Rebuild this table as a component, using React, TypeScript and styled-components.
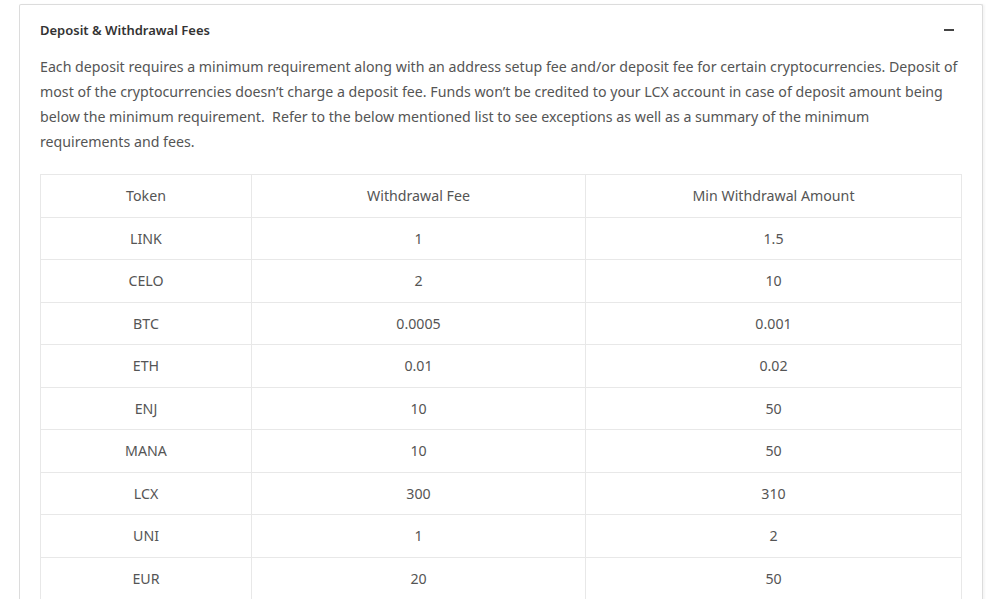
import React from "react";
import styled, { createGlobalStyle } from "styled-components";

const Global = createGlobalStyle`
  html, body { margin: 0; padding: 0; background: #fff; }
  body { font-family: "Noto Sans", "Open Sans", sans-serif; color: #555; }
  * { box-sizing: border-box; }
`;

const Page = styled.div`
  padding: 4px 17px 0 19px;
  height: 599px;
  overflow: hidden;
`;

const Card = styled.section`
  border: 1px solid #dcdcdc;
  border-bottom: none;
  border-radius: 2px;
  background: #fff;
  padding: 15px 20px 0 20px;
  box-shadow: 2px 0 2px rgba(0, 0, 0, 0.04);
  min-height: 620px;
`;

const Header = styled.div`
  display: flex;
  align-items: center;
  justify-content: space-between;
  height: 20px;
`;

const Title = styled.h3`
  margin: 0;
  font-size: 13px;
  font-weight: 600;
  color: #333;
`;

const Minus = styled.span`
  display: block;
  width: 10px;
  height: 2px;
  background: #444;
  margin-right: 8px;
`;

const Text = styled.p`
  margin: 14px 0 0 0;
  font-size: 14.2px;
  line-height: 25px;
  color: #555;
`;

const Table = styled.table`
  margin-top: 20px;
  width: 921px;
  border-collapse: collapse;
  table-layout: fixed;
`;

const Col = styled.col<{ $w: number }>`
  width: ${(p) => p.$w}px;
`;

const Cell = styled.td`
  border: 1px solid #e8e8e8;
  height: 42.5px;
  padding: 0 8px;
  text-align: center;
  font-size: 14.2px;
  color: #555;
`;

const HeadCell = styled(Cell).attrs({ as: "th" })`
  font-weight: 400;
`;

const rows: [string, string, string][] = [
  ["LINK", "1", "1.5"],
  ["CELO", "2", "10"],
  ["BTC", "0.0005", "0.001"],
  ["ETH", "0.01", "0.02"],
  ["ENJ", "10", "50"],
  ["MANA", "10", "50"],
  ["LCX", "300", "310"],
  ["UNI", "1", "2"],
  ["EUR", "20", "50"],
];

export default function App() {
  return (
    <>
      <Global />
      <Page>
        <Card>
          <Header>
            <Title>Deposit &amp; Withdrawal Fees</Title>
            <Minus />
          </Header>
          <Text>
            Each deposit requires a minimum requirement along with an address setup fee and/or deposit fee for certain
            cryptocurrencies. Deposit of most of the cryptocurrencies doesn’t charge a deposit fee. Funds won’t be
            credited to your LCX account in case of deposit amount being below the minimum requirement.&nbsp; Refer to
            the below mentioned list to see exceptions as well as a summary of the minimum <br />
            requirements and fees.
          </Text>
          <Table>
            <colgroup>
              <Col $w={211} />
              <Col $w={334} />
              <Col $w={376} />
            </colgroup>
            <thead>
              <tr>
                <HeadCell>Token</HeadCell>
                <HeadCell>Withdrawal Fee</HeadCell>
                <HeadCell>Min Withdrawal Amount</HeadCell>
              </tr>
            </thead>
            <tbody>
              {rows.map((r) => (
                <tr key={r[0]}>
                  <Cell>{r[0]}</Cell>
                  <Cell>{r[1]}</Cell>
                  <Cell>{r[2]}</Cell>
                </tr>
              ))}
            </tbody>
          </Table>
        </Card>
      </Page>
    </>
  );
}
